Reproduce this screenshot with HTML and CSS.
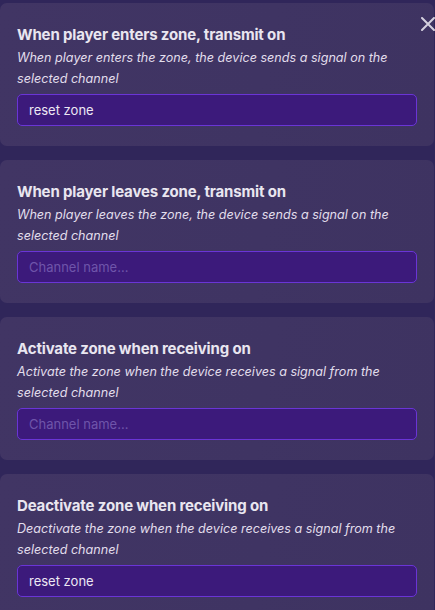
FILE: index.html
```html
<!DOCTYPE html>
<html>
<head>
<meta charset="utf-8">
<link rel="stylesheet" href="styles.css">
</head>
<body>
<div class="panel">
  <button class="close" aria-label="Close">
    <svg width="14" height="14" viewBox="0 0 14 14"><path d="M1 1L13 13M13 1L1 13" stroke="#d4d0de" stroke-width="2" stroke-linecap="round"/></svg>
  </button>
  <div class="card">
    <div class="title">When player enters zone, transmit on</div>
    <div class="desc">When player enters the zone, the device sends a signal on the selected channel</div>
    <div class="field">reset zone</div>
  </div>
  <div class="card">
    <div class="title">When player leaves zone, transmit on</div>
    <div class="desc">When player leaves the zone, the device sends a signal on the selected channel</div>
    <div class="field placeholder">Channel name...</div>
  </div>
  <div class="card">
    <div class="title">Activate zone when receiving on</div>
    <div class="desc">Activate the zone when the device receives a signal from the selected channel</div>
    <div class="field placeholder">Channel name...</div>
  </div>
  <div class="card">
    <div class="title">Deactivate zone when receiving on</div>
    <div class="desc">Deactivate the zone when the device receives a signal from the selected channel</div>
    <div class="field">reset zone</div>
  </div>
</div>
</body>
</html>
```

FILE: styles.css
```css
html, body {
  margin: 0;
  padding: 0;
  background: #30265a;
  overflow: hidden;
}
body {
  font-family: Inter, "Noto Sans", sans-serif;
  color: #e8e4f0;
}
.panel {
  position: relative;
  padding-top: 3px;
  width: 434px;
  display: flex;
  flex-direction: column;
  gap: 14px;
}
.card {
  background: linear-gradient(100deg, #413564 0%, #3f3463 60%, #3e3361 100%);
  border-radius: 7px;
  padding: 22px 17px 20px 17px;
  display: flex;
  flex-direction: column;
}
.title {
  font-size: 15px;
  font-weight: 700;
  line-height: 20px;
  color: #e9e6f0;
  letter-spacing: -0.15px;
}
.desc {
  font-size: 12.6px;
  font-style: italic;
  line-height: 21px;
  color: #e2deec;
  margin-top: 2px;
}
.field {
  margin-top: 5px;
  height: 30px;
  border: 1px solid #6a35d6;
  border-radius: 5px;
  background: #3c1a7b;
  font-size: 13px;
  line-height: 30px;
  padding: 0 11px;
  color: #ece8f4;
}
.field.placeholder {
  color: #6f55aa;
}
.close {
  position: absolute;
  top: 17px;
  left: 421px;
  width: 14px;
  height: 14px;
  padding: 0;
  border: 0;
  background: none;
  display: block;
}
.close svg { display: block; }
```
